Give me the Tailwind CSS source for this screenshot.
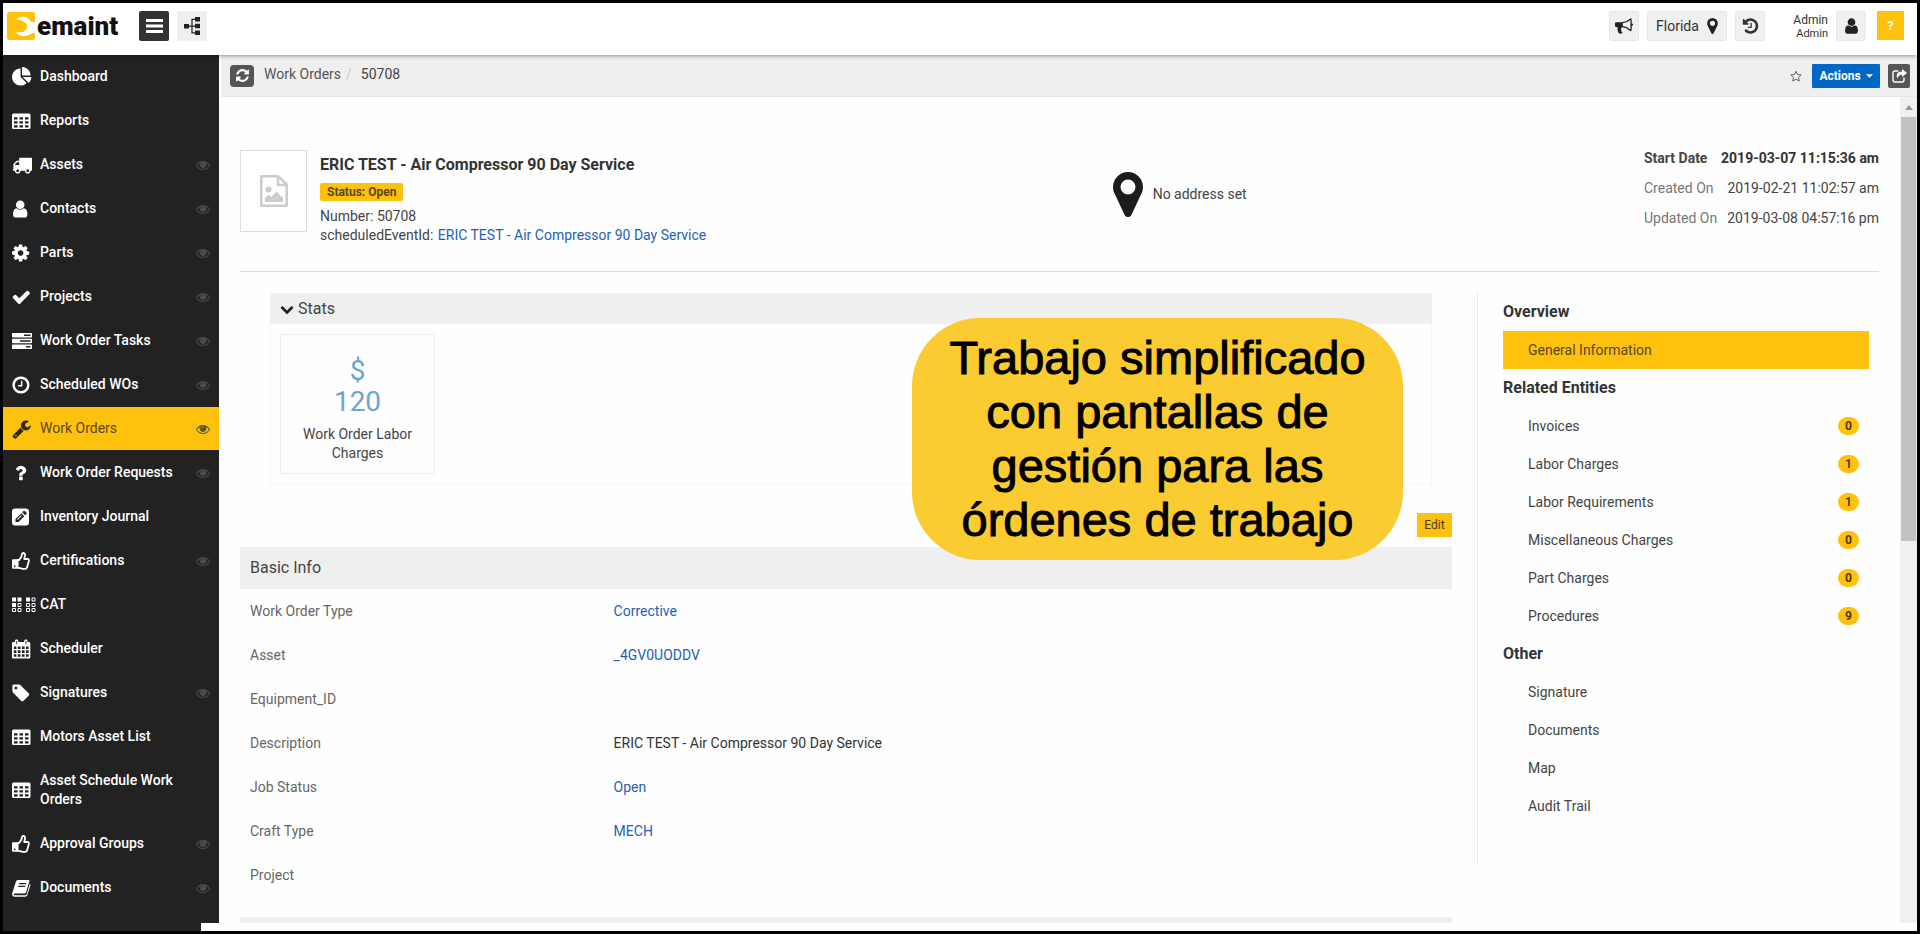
<!DOCTYPE html>
<html lang="en">
<head>
    <meta charset="UTF-8">
    <title>Work Orders - 50708</title>
    <script src="https://cdn.jsdelivr.net/npm/@tailwindcss/browser@4"></script>
</head>
<body class="relative h-screen flex flex-col overflow-hidden border-[3px] border-black bg-[#fefefe] font-[Roboto,sans-serif] text-sm leading-[19px] text-[#444]">

    <!-- Icons -->
    <svg class="hidden">
        <symbol id="i-pie" viewBox="0 0 1792 1792"><path d="M768 890l546 546q-106 108-247.5 168t-298.5 60q-209 0-385.5-103t-279.5-279.5-103-385.5 103-385.5 279.5-279.5 385.5-103v762zm187 6h773q0 157-60 298.5t-168 247.5zm709-128h-768v-768q209 0 385.5 103t279.5 279.5 103 385.5z"/></symbol>
        <symbol id="i-table" viewBox="0 0 20 20"><path fill-rule="evenodd" d="M1.5 2.5h15.500q1.500 0 1.500 1.500v12.500q0 1.500-1.500 1.500h-15.500q-1.500 0-1.500-1.500v-12.500q0-1.500 1.500-1.500zM2 6.200v2.300h3.500v-2.300zM7.500 6.200v2.300h3.500v-2.300zM13 6.200v2.300h3.500v-2.300zM2 10.200v2.300h3.500v-2.300zM7.500 10.200v2.300h3.500v-2.300zM13 10.200v2.300h3.500v-2.300zM2 14.200v2.300h3.500v-2.300zM7.500 14.200v2.300h3.500v-2.300zM13 14.200v2.300h3.500v-2.300z"/></symbol>
        <symbol id="i-truck" viewBox="0 0 1792 1792"><path d="M640 1408q0-52-38-90t-90-38-90 38-38 90 38 90 90 38 90-38 38-90zm-384-512h384v-256h-158q-13 0-22 9l-195 195q-9 9-9 22v30zm1280 512q0-52-38-90t-90-38-90 38-38 90 38 90 90 38 90-38 38-90zm256-1088v1024q0 15-4 26.5t-13.500 18.500-16.500 11.500-23.500 6-22.500 2-25.500 0-22.500-.5q0 106-75 181t-181 75-181-75-75-181h-384q0 106-75 181t-181 75-181-75-75-181h-64q-3 0-22.500.5t-25.500 0-22.500-2-23.500-6-16.500-11.500-13.500-18.500-4-26.500q0-26 19-45t45-19v-320q0-8-.5-35t0-38 2.500-34.500 6.500-37 14-30.500 22.500-30l198-198q19-19 50.500-32t58.500-13h160v-192q0-26 19-45t45-19h1024q26 0 45 19t19 45z"/></symbol>
        <symbol id="i-user" viewBox="160 0 1792 1792"><path d="M1536 1399q0 109-62.5 187t-150.5 78h-854q-88 0-150.5-78t-62.5-187q0-85 8.5-160.5t31.5-152 58.5-131 94-89 134.5-34.5q131 128 313 128t313-128q76 0 134.5 34.5t94 89 58.5 131 31.5 152 8.5 160.5zm-256-887q0 159-112.5 271.5t-271.5 112.5-271.5-112.5-112.5-271.5 112.5-271.5 271.5-112.5 271.5 112.5 112.5 271.5z"/></symbol>
        <symbol id="i-cog" viewBox="128 0 1792 1792"><path d="M1152 896q0-106-75-181t-181-75-181 75-75 181 75 181 181 75 181-75 75-181zm512-109v222q0 12-8 23t-20 13l-185 28q-19 54-39 91 35 50 107 138 10 12 10 25t-9 23q-27 37-99 108t-94 71q-12 0-26-9l-138-108q-44 23-91 38-16 136-29 186-7 28-36 28h-222q-14 0-24.5-8.5t-11.5-21.5l-28-184q-49-16-90-37l-141 107q-10 9-25 9-14 0-25-11-126-114-165-168-7-10-7-23 0-12 8-23 15-21 51-66.5t54-70.5q-27-50-41-99l-183-27q-13-2-21-12.5t-8-23.5v-222q0-12 8-23t19-13l186-28q14-46 39-92-40-57-107-138-10-12-10-24 0-10 9-23 26-36 98.5-107.5t94.5-71.5q13 0 26 10l138 107q44-23 91-38 16-136 29-186 7-28 36-28h222q14 0 24.5 8.5t11.5 21.5l28 184q49 16 90 37l142-107q9-9 24-9 13 0 25 10 129 119 165 170 7 8 7 22 0 12-8 23-15 21-51 66.5t-54 70.5q26 50 41 98l183 28q13 2 21 12.5t8 23.5z"/></symbol>
        <symbol id="i-check" viewBox="64 0 1792 1792"><path d="M1671 566q0 40-28 68l-724 724-136 136q-28 28-68 28t-68-28l-136-136-362-362q-28-28-28-68t28-68l136-136q28-28 68-28t68 28l294 295 656-657q28-28 68-28t68 28l136 136q28 28 28 68z"/></symbol>
        <symbol id="i-tasks" viewBox="0 0 20 20"><path fill-rule="evenodd" d="M.7 2h18.600q.7 0 .7.7v3.100q0 .7-.7.7h-18.600q-.7 0-.7-.7v-3.100q0-.7.7-.7zM12 3.500v1.500h6.500v-1.500zM.7 7.700h18.600q.7 0 .7.7v3.100q0 .7-.7.7h-18.600q-.7 0-.7-.7v-3.100q0-.7.7-.7zM8 9.200v1.500h10.500v-1.500zM.7 13.400h18.600q.7 0 .7.7v3.100q0 .7-.7.7h-18.600q-.7 0-.7-.7v-3.100q0-.7.7-.7zM14 14.900v1.500h4.500v-1.500z"/></symbol>
        <symbol id="i-clock" viewBox="96 0 1792 1792"><path d="M1024 544v448q0 14-9 23t-23 9h-320q-14 0-23-9t-9-23v-64q0-14 9-23t23-9h224v-352q0-14 9-23t23-9h64q14 0 23 9t9 23zm416 352q0-148-73-273t-198-198-273-73-273 73-198 198-73 273 73 273 198 198 273 73 273-73 198-198 73-273zm224 0q0 209-103 385.5t-279.5 279.5-385.5 103-385.5-103-279.5-279.5-103-385.5 103-385.5 279.5-279.5 385.5-103 385.5 103 279.5 279.5 103 385.5z"/></symbol>
        <symbol id="i-wrench" viewBox="32 0 1792 1792"><path d="M448 1472q0-26-19-45t-45-19-45 19-19 45 19 45 45 19 45-19 19-45zm644-420l-682 682q-37 37-90 37-52 0-91-37l-106-108q-38-36-38-90 0-53 38-91l681-681q39 98 114.5 173.5t173.5 114.5zm634-435q0 39-23 106-47 134-164.5 217.5t-258.5 83.5q-185 0-316.5-131.5t-131.5-316.5 131.5-316.5 316.5-131.5q58 0 121.5 16.5t107.5 46.5q16 11 16 28t-16 28l-293 169v224l193 107q5-3 79-48.5t135.5-81 70.5-35.5q15 0 23.5 10t8.5 25z"/></symbol>
        <symbol id="i-question" viewBox="128 0 1792 1792"><path d="M1088 1256v240q0 16-12 28t-28 12h-240q-16 0-28-12t-12-28v-240q0-16 12-28t28-12h240q16 0 28 12t12 28zm316-600q0 54-15.5 101t-35 76.5-55 59.5-57.5 43.5-61 35.5q-41 23-68.5 65t-27.5 67q0 17-12 32.5t-28 15.5h-240q-15 0-25.5-18.5t-10.5-37.5v-45q0-83 65-156.5t143-108.5q59-27 84-56t25-76q0-42-46.5-74t-107.5-32q-65 0-108 29-35 25-107 115-13 16-31 16-12 0-25-8l-164-125q-13-10-15.5-25t5.5-28q160-266 464-266 80 0 161 31t146 83 106 127.5 41 158.5z"/></symbol>
        <symbol id="i-pencil-square" viewBox="0 0 20 20"><path fill-rule="evenodd" d="M3 1.500h11q3 0 3 3v11q0 3-3 3h-11q-3 0-3-3v-11q0-3 3-3zM3.500 12v3h3l5.800-5.800-3-3zM10.200 5.300l3 3 1.300-1.300q.6-.6 0-1.200l-1.800-1.800q-.6-.6-1.200 0zM5 12.300l4.200-4.200.6.6-4.200 4.200z"/></symbol>
        <symbol id="i-thumb" viewBox="0 0 20 20"><path fill="none" stroke="currentColor" stroke-width="1.800" stroke-linejoin="round" d="M5.500 9h1.500c1.500-1.500 2.300-2.500 2.700-4.500.2-1.400.5-2.500 1.500-2.500 1.400 0 2 1.200 1.800 2.800l-.8 3.200h3.300c1.300 0 1.700 1 1.300 2.200l-1.700 6c-.3 1-.9 1.600-2 1.600h-2.100c-2 0-3.500-1-5.500-1.200z"/><path fill-rule="evenodd" d="M1 8.300h5.200v9.500h-5.200q-1 0-1-1v-7.500q0-1 1-1zM2.700 14.600a.8.800 0 1 0 .01 0z"/></symbol>
        <symbol id="i-cat" viewBox="0 0 24 20"><path d="M0 2.500h4v4h-4zM5.500 2.500h4v4h-4zM0 8h4v4h-4zM14 2.500h4v4h-4z"/><path fill="none" stroke="currentColor" d="M6 8.500h3v3h-3zM.5 13.500h3v3h-3zM6 13.500h3v3h-3zM20 3h3v3h-3zM14.500 8.500h3v3h-3zM20 8.500h3v3h-3zM14.500 13.500h3v3h-3zM20 13.500h3v3h-3z"/></symbol>
        <symbol id="i-calendar" viewBox="0 0 20 20"><path fill-rule="evenodd" d="M1.300 3h1.700v-1.200q0-1.300 1.300-1.300h.7q1.300 0 1.300 1.300v1.200h5.900v-1.200q0-1.300 1.300-1.300h.7q1.300 0 1.300 1.300v1.200h1.500q1.300 0 1.300 1.300v13.900q0 1.300-1.300 1.300h-15.700q-1.300 0-1.300-1.300v-13.900q0-1.300 1.300-1.300zM4.300 2v3.300h.9v-3.300zM13.500 2v3.300h.9v-3.300zM1.800 7.500v2.500h2.600v-2.500zM5.800 7.500v2.500h2.700v-2.500zM9.900 7.500v2.500h2.700v-2.500zM14 7.500v2.500h2.600v-2.500zM1.800 11.300v2.600h2.600v-2.600zM5.800 11.300v2.600h2.700v-2.600zM9.900 11.300v2.600h2.700v-2.600zM14 11.300v2.600h2.600v-2.600zM1.800 15.200v2.600h2.600v-2.600zM5.800 15.200v2.600h2.700v-2.600zM9.900 15.200v2.600h2.700v-2.600zM14 15.200v2.600h2.600v-2.600z"/></symbol>
        <symbol id="i-tag" viewBox="96 0 1792 1792"><path d="M576 448q0-53-37.5-90.5t-90.5-37.5-90.5 37.5-37.5 90.5 37.5 90.5 90.5 37.5 90.5-37.5 37.5-90.5zm1067 576q0 53-37 90l-491 492q-39 37-91 37-53 0-90-37l-715-716q-38-37-64.5-101t-26.5-117v-416q0-52 38-90t90-38h416q53 0 117 26.5t102 64.5l715 714q37 39 37 91z"/></symbol>
        <symbol id="i-book" viewBox="0 0 20 20"><path fill-rule="evenodd" d="M6 2h10.500q1.300 0 .9 1.300l-3.400 11q-.4 1.200-1.700 1.200h-9.800q-1 0-.8.900.3.900 1.500.9h10.200q.8 0 1.100-.8l3.300-10.800q.9.600.6 1.800l-3.200 9.800q-.5 1.400-2 1.400h-10.700q-1.700 0-2.300-1.700-.3-1 .1-2l3.400-10.800q.6-2.200 2.300-2.200zM7.300 5l-.4 1.200h7l.4-1.200zM6.500 7.700l-.4 1.200h7l.4-1.200z"/></symbol>
        <symbol id="i-eye" viewBox="0 0 1792 1792"><path d="M1664 960q-152-236-381-353 61 104 61 225 0 185-131.5 316.5t-316.5 131.5-316.5-131.5-131.5-316.5q0-121 61-225-229 117-381 353 133 205 333.5 326.5t434.5 121.5 434.5-121.5 333.5-326.5zm-720-384q0-20-14-34t-34-14q-125 0-214.5 89.5t-89.5 214.5q0 20 14 34t34 14 34-14 14-34q0-86 61-147t147-61q20 0 34-14t14-34zm848 384q0 34-20 69-140 230-376.5 368.5t-499.5 138.5-499.5-139-376.5-368q-20-35-20-69t20-69q140-229 376.5-368t499.5-139 499.5 139 376.5 368q20 35 20 69z"/><circle cx="896" cy="832" r="330" opacity=".5"/></symbol>
        <symbol id="i-marker" viewBox="384 128 1024 1536"><path d="M1152 640q0-106-75-181t-181-75-181 75-75 181 75 181 181 75 181-75 75-181zm256 0q0 109-33 179l-364 774q-16 33-47.5 52t-67.5 19-67.5-19-46.5-52l-365-774q-33-70-33-179 0-212 150-362t362-150 362 150 150 362z"/></symbol>
        <symbol id="i-bullhorn" viewBox="0 0 1792 1792"><path d="M1664 640q53 0 90.5 37.5t37.5 90.5-37.5 90.5-90.5 37.5v384q0 52-38 90t-90 38q-417-347-812-380-58 19-91 66t-31 100.5 40 92.5q-20 33-23 65.5t6 58 33.5 55 48 50 61.5 50.5q-29 58-111.5 83t-168.5 11.5-132-55.5q-7-23-29.5-87.5t-32-94.5-23-89-15-101 3.5-98.5 22-110.5h-122q-66 0-113-47t-47-113v-192q0-66 47-113t113-47h480q435 0 896-384 52 0 90 38t38 90v384zm-128 604v-954q-394 302-768 343v270q377 42 768 341z"/></symbol>
        <symbol id="i-history" viewBox="64 0 1664 1792"><path d="M1664 896q0 156-61 298t-164 245-245 164-298 61q-172 0-327-72.5t-264-204.5q-7-10-6.5-22.5t8.5-20.5l137-138q10-9 25-9 16 2 23 12 73 95 179 147t225 52q104 0 198.5-40.5t163.5-109.5 109.5-163.5 40.5-198.5-40.5-198.5-109.5-163.5-163.5-109.5-198.5-40.5q-98 0-188 35.5t-160 101.5l137 138q31 30 14 69-17 40-59 40h-448q-26 0-45-19t-19-45v-448q0-42 40-59 39-17 69 14l130 129q107-101 244.5-156.5t284.5-55.5q156 0 298 61t245 164 164 245 61 298zm-640-288v448q0 14-9 23t-23 9h-320q-14 0-23-9t-9-23v-64q0-14 9-23t23-9h224v-352q0-14 9-23t23-9h64q14 0 23 9t9 23z"/></symbol>
        <symbol id="i-refresh" viewBox="0 0 1792 1792"><path d="M1639 1056q0 5-1 7-64 268-268 434.5t-478 166.5q-146 0-282.5-55t-243.5-157l-129 129q-19 19-45 19t-45-19-19-45v-448q0-26 19-45t45-19h448q26 0 45 19t19 45-19 45l-137 137q71 66 161 102t187 36q134 0 250-65t186-179q11-17 53-117 8-23 30-23h192q13 0 22.5 9.5t9.5 22.5zm25-800v448q0 26-19 45t-45 19h-448q-26 0-45-19t-19-45 19-45l138-138q-148-137-349-137-134 0-250 65t-186 179q-11 17-53 117-8 23-30 23h-199q-13 0-22.5-9.5t-9.5-22.5v-7q65-268 270-434.5t480-166.5q146 0 284 55.5t245 156.5l130-129q19-19 45-19t45 19 19 45z"/></symbol>
        <symbol id="i-chevron" viewBox="0 0 1792 1792"><path d="M1683 808l-742 741q-19 19-45 19t-45-19l-742-741q-19-19-19-45.5t19-45.5l166-165q19-19 45-19t45 19l531 531 531-531q19-19 45-19t45 19l166 165q19 19 19 45.5t-19 45.5z"/></symbol>
    </svg>

    <!-- Top bar -->
    <header class="relative z-10 flex h-[52px] shrink-0 items-start bg-white pt-2 pr-[13px] pl-1 shadow-[0_1px_4px_rgba(0,0,0,0.4)]">
        <a href="#" class="flex h-[30px] w-[132px] items-center gap-[2px] text-[26px] leading-[30px] font-black text-[#111]">
            <svg class="h-[28px] w-[28px] shrink-0" viewBox="0 0 28 28">
                <path fill="#fec10d" d="M3 0h23q2 0 2 2v24q0 2-2 2h-23q-3 0-3-3v-22q0-3 3-3z"/>
                <path fill="#fff" d="M9 7q4-3 9-2 4 1 6 5h4v11h-3q-3 3-8 3-5 0-8-3.500l7-.5 4-3.500v-4l-4-3.500z"/>
            </svg>
            emaint
        </a>
        <button aria-label="Toggle menu" class="mr-2 flex h-[30px] w-[30px] items-center justify-center rounded-[2px] bg-[#333]">
            <svg class="h-4 w-[17px] fill-white" viewBox="0 0 17 16"><path d="M0 1h17v3h-17zM0 6.500h17v3h-17zM0 12h17v3h-17z"/></svg>
        </button>
        <button aria-label="Hierarchy" class="flex h-[30px] w-[30px] items-center justify-center rounded-[2px] bg-[#efefef]">
            <svg class="h-[18px] w-4 fill-[#222]" viewBox="0 0 16 18"><path d="M0 7h5v4.500h-5zM11 0h5v4.500h-5zM11 6.800h5v4.500h-5zM11 13.500h5v4.500h-5z"/><path fill="none" stroke="#222" stroke-width="1.200" d="M5 9.200h6M11 2.300h-3v13.500h3"/></svg>
        </button>
        <div class="ml-auto flex items-start gap-2 text-[#333]">
            <button aria-label="Announcements" class="flex h-[30px] w-[30px] items-center justify-center rounded-[2px] border border-[#e8e8e8] bg-[#f0f0f0]"><svg class="h-[18px] w-[18px] fill-[#222]"><use href="#i-bullhorn"/></svg></button>
            <button class="flex h-[30px] w-[80px] items-center justify-center gap-2 rounded-[2px] border border-[#e8e8e8] bg-[#f0f0f0]">Florida <svg class="h-4 w-[11px] fill-[#222]"><use href="#i-marker"/></svg></button>
            <button aria-label="History" class="flex h-[30px] w-[30px] items-center justify-center rounded-[2px] border border-[#e8e8e8] bg-[#f0f0f0]"><svg class="h-[18px] w-[17px] fill-[#333]"><use href="#i-history"/></svg></button>
            <div class="w-[55px] pt-[2px] text-right leading-[13px]">
                <div class="text-xs leading-[14px]">Admin</div>
                <div class="text-[11px]">Admin</div>
            </div>
            <button aria-label="Account" class="flex h-[30px] w-[30px] items-center justify-center rounded-[2px] border border-[#e8e8e8] bg-[#f0f0f0]"><svg class="h-[18px] w-[13px] fill-[#222]" viewBox="256 0 1280 1792"><path d="M1536 1399q0 109-62.5 187t-150.5 78h-854q-88 0-150.5-78t-62.5-187q0-85 8.5-160.5t31.5-152 58.5-131 94-89 134.5-34.5q131 128 313 128t313-128q76 0 134.5 34.5t94 89 58.5 131 31.5 152 8.5 160.5zm-256-887q0 159-112.5 271.5t-271.5 112.5-271.5-112.5-112.5-271.5 112.5-271.5 271.5-112.5 271.5 112.5 112.5 271.5z"/></svg></button>
            <button class="ml-[3px] h-[29px] w-[27px] bg-[#fec10d] text-xs font-bold text-white">?</button>
        </div>
    </header>

    <div class="flex min-h-0 flex-1">
        <!-- Sidebar -->
        <nav class="relative w-[216px] shrink-0 overflow-hidden bg-[#222] font-medium text-white">
            <ul class="flex flex-col gap-px">
                <li><a href="#" class="flex items-center gap-2 px-[9px] py-3"><svg class="-my-1 h-5 w-5 shrink-0 fill-current"><use href="#i-pie"/></svg><span class="w-[150px]">Dashboard</span></a></li>
                <li><a href="#" class="flex items-center gap-2 px-[9px] py-3"><svg class="-my-1 h-5 w-5 shrink-0 fill-current"><use href="#i-table"/></svg><span class="w-[150px]">Reports</span></a></li>
                <li><a href="#" class="flex items-center gap-2 px-[9px] py-3"><svg class="-my-1 h-5 w-5 shrink-0 fill-current"><use href="#i-truck"/></svg><span class="w-[150px]">Assets</span><svg class="ml-auto h-3.5 w-3.5 shrink-0 fill-[#4c4c4c]"><use href="#i-eye"/></svg></a></li>
                <li><a href="#" class="flex items-center gap-2 px-[9px] py-3"><svg class="-my-1 h-5 w-5 shrink-0 fill-current"><use href="#i-user"/></svg><span class="w-[150px]">Contacts</span><svg class="ml-auto h-3.5 w-3.5 shrink-0 fill-[#4c4c4c]"><use href="#i-eye"/></svg></a></li>
                <li><a href="#" class="flex items-center gap-2 px-[9px] py-3"><svg class="-my-1 h-5 w-5 shrink-0 fill-current"><use href="#i-cog"/></svg><span class="w-[150px]">Parts</span><svg class="ml-auto h-3.5 w-3.5 shrink-0 fill-[#4c4c4c]"><use href="#i-eye"/></svg></a></li>
                <li><a href="#" class="flex items-center gap-2 px-[9px] py-3"><svg class="-my-1 h-5 w-5 shrink-0 fill-current"><use href="#i-check"/></svg><span class="w-[150px]">Projects</span><svg class="ml-auto h-3.5 w-3.5 shrink-0 fill-[#4c4c4c]"><use href="#i-eye"/></svg></a></li>
                <li><a href="#" class="flex items-center gap-2 px-[9px] py-3"><svg class="-my-1 h-5 w-5 shrink-0 fill-current"><use href="#i-tasks"/></svg><span class="w-[150px]">Work Order Tasks</span><svg class="ml-auto h-3.5 w-3.5 shrink-0 fill-[#4c4c4c]"><use href="#i-eye"/></svg></a></li>
                <li><a href="#" class="flex items-center gap-2 px-[9px] py-3"><svg class="-my-1 h-5 w-5 shrink-0 fill-current"><use href="#i-clock"/></svg><span class="w-[150px]">Scheduled WOs</span><svg class="ml-auto h-3.5 w-3.5 shrink-0 fill-[#4c4c4c]"><use href="#i-eye"/></svg></a></li>
                <li><a href="#" class="flex items-center gap-2 bg-[#fec10d] px-[9px] py-3 font-normal text-[#5a4715]"><svg class="-my-1 h-5 w-5 shrink-0 fill-[#332a10]"><use href="#i-wrench"/></svg><span class="w-[150px]">Work Orders</span><svg class="ml-auto h-3.5 w-3.5 shrink-0 fill-[#5a5a2c]"><use href="#i-eye"/></svg></a></li>
                <li><a href="#" class="flex items-center gap-2 px-[9px] py-3"><svg class="-my-1 h-5 w-5 shrink-0 fill-current"><use href="#i-question"/></svg><span class="w-[150px]">Work Order Requests</span><svg class="ml-auto h-3.5 w-3.5 shrink-0 fill-[#4c4c4c]"><use href="#i-eye"/></svg></a></li>
                <li><a href="#" class="flex items-center gap-2 px-[9px] py-3"><svg class="-my-1 h-5 w-5 shrink-0 fill-current"><use href="#i-pencil-square"/></svg><span class="w-[150px]">Inventory Journal</span></a></li>
                <li><a href="#" class="flex items-center gap-2 px-[9px] py-3"><svg class="-my-1 h-5 w-5 shrink-0 fill-current"><use href="#i-thumb"/></svg><span class="w-[150px]">Certifications</span><svg class="ml-auto h-3.5 w-3.5 shrink-0 fill-[#4c4c4c]"><use href="#i-eye"/></svg></a></li>
                <li><a href="#" class="flex items-center gap-1 px-[9px] py-3"><svg class="-my-1 h-5 w-6 shrink-0 fill-current"><use href="#i-cat"/></svg><span class="w-[150px]">CAT</span></a></li>
                <li><a href="#" class="flex items-center gap-2 px-[9px] py-3"><svg class="-my-1 h-5 w-5 shrink-0 fill-current"><use href="#i-calendar"/></svg><span class="w-[150px]">Scheduler</span></a></li>
                <li><a href="#" class="flex items-center gap-2 px-[9px] py-3"><svg class="-my-1 h-5 w-5 shrink-0 fill-current"><use href="#i-tag"/></svg><span class="w-[150px]">Signatures</span><svg class="ml-auto h-3.5 w-3.5 shrink-0 fill-[#4c4c4c]"><use href="#i-eye"/></svg></a></li>
                <li><a href="#" class="flex items-center gap-2 px-[9px] py-3"><svg class="-my-1 h-5 w-5 shrink-0 fill-current"><use href="#i-table"/></svg><span class="w-[150px]">Motors Asset List</span></a></li>
                <li><a href="#" class="flex items-center gap-2 px-[9px] py-3"><svg class="-my-1 h-5 w-5 shrink-0 fill-current"><use href="#i-table"/></svg><span class="w-[150px]">Asset Schedule Work Orders</span></a></li>
                <li><a href="#" class="flex items-center gap-2 px-[9px] py-3"><svg class="-my-1 h-5 w-5 shrink-0 fill-current"><use href="#i-thumb"/></svg><span class="w-[150px]">Approval Groups</span><svg class="ml-auto h-3.5 w-3.5 shrink-0 fill-[#4c4c4c]"><use href="#i-eye"/></svg></a></li>
                <li><a href="#" class="flex items-center gap-2 px-[9px] py-3"><svg class="-my-1 h-5 w-5 shrink-0 fill-current"><use href="#i-book"/></svg><span class="w-[150px]">Documents</span><svg class="ml-auto h-3.5 w-3.5 shrink-0 fill-[#4c4c4c]"><use href="#i-eye"/></svg></a></li>
            </ul>
            <div class="absolute right-0 bottom-0 h-2 w-[18px] bg-white"></div>
        </nav>

        <main class="flex min-w-0 flex-1 flex-col pb-2">
            <!-- Breadcrumb -->
            <div class="ml-[2px] flex h-[42px] shrink-0 items-center border-b border-[#e6e6e6] bg-[#efefef] pr-[7px] pl-[9px]">
                <button aria-label="Refresh" class="mr-2.5 flex h-[22px] w-6 items-center justify-center rounded bg-[#555]"><svg class="h-[15px] w-[15px] fill-white"><use href="#i-refresh"/></svg></button>
                <nav class="flex pb-[2px]">
                    <a href="#" class="text-[#555]">Work Orders</a>
                    <span class="mr-[9px] ml-[5px] text-[#ccc]">/</span>
                    <span>50708</span>
                </nav>
                <button aria-label="Favorite" class="mr-2.5 ml-auto"><svg class="h-3 w-3" viewBox="0 0 13 12"><path fill="none" stroke="#555" d="M6.500.9l1.700 3.500 3.900.5-2.800 2.700.7 3.800-3.500-1.800-3.500 1.800.7-3.800-2.800-2.700 3.900-.5z"/></svg></button>
                <button class="mr-2 flex h-6 w-[68px] items-center justify-center gap-[5px] rounded-[1px] bg-[#0168c5] text-xs font-bold text-white">Actions <svg class="h-1 w-[7px] fill-white" viewBox="0 0 8 4"><path d="M0 0h8l-4 4z"/></svg></button>
                <button aria-label="Share" class="flex h-6 w-[22px] items-center justify-center rounded-[2px] bg-[#555]"><svg class="h-[14px] w-[15px]" viewBox="0 0 15 14"><path fill="none" stroke="#fff" stroke-width="1.400" d="M6.500 2h-3.500q-2 0-2 2v7q0 2 2 2h7q2 0 2-2v-2.500"/><path fill="#fff" d="M10 0l5 4-5 4v-2.300q-3.500-.2-4.500 3.800-2.800-6.800 4.500-7z"/></svg></button>
            </div>

            <div class="flex min-h-0 flex-1">
                <div class="min-w-0 flex-1 overflow-hidden pt-[45px] pr-[21px] pl-[21px]">
                    <!-- Record summary -->
                    <section class="flex items-start border-b border-[#ddd] pb-[26px]">
                        <div class="flex w-[53%] gap-[13px] pt-2">
                            <div class="flex h-[82px] w-[67px] shrink-0 items-center justify-center border border-[#ddd] bg-white">
                                <svg class="h-8 w-7" viewBox="0 0 28 32"><path fill="none" stroke="#ccc" stroke-width="2.500" stroke-linejoin="round" d="M1.300 1.300h17.200l8.200 8.200v21.200h-25.400zM18 1.500v8.500h8.500"/><circle cx="8.500" cy="14.500" r="3" fill="#ccc"/><path fill="#ccc" d="M5 27v-4l3.500-3.500 2.500 2.500 5.500-5.500 6.500 6.500v4z"/></svg>
                            </div>
                            <div class="pt-[5px]">
                                <h1 class="text-base leading-5 font-bold text-[#333]">ERIC TEST - Air Compressor 90 Day Service</h1>
                                <div class="mt-2 mb-1.5 w-fit rounded-[2px] bg-[#fec10d] px-[7px] text-xs leading-[18px] font-bold text-[#5a4715]">Status: Open</div>
                                <p>Number: 50708</p>
                                <p>scheduledEventId: <a href="#" class="ml-px text-[#1f61b5]">ERIC TEST - Air Compressor 90 Day Service</a></p>
                            </div>
                        </div>
                        <div class="flex items-center gap-2.5 pt-[30px] pl-1">
                            <svg class="h-[45px] w-[30px] fill-[#1c1c1c]"><use href="#i-marker"/></svg>
                            <p>No address set</p>
                        </div>
                        <div class="ml-auto w-[235px] pt-px leading-[30px]">
                            <p class="flex justify-between font-bold text-[#444]"><span>Start Date</span><span class="text-[#333]">2019-03-07 11:15:36 am</span></p>
                            <p class="flex justify-between"><span class="text-[#777]">Created On</span><span>2019-02-21 11:02:57 am</span></p>
                            <p class="flex justify-between"><span class="text-[#777]">Updated On</span><span>2019-03-08 04:57:16 pm</span></p>
                        </div>
                    </section>

                    <div class="flex items-start gap-[25px] pt-[21px]">
                        <div class="min-w-0 flex-1">
                            <!-- Stats -->
                            <section class="mr-5 ml-[30px]">
                                <h2 class="flex h-[31px] items-center gap-1 bg-[#efefef] pl-2.5 text-base text-[#444]"><svg class="h-3.5 w-3.5 fill-[#222]"><use href="#i-chevron"/></svg>Stats</h2>
                                <div class="border border-t-0 border-[#f5f5f5] p-2.5 pl-[9px]">
                                    <div class="flex h-[140px] w-[155px] flex-col items-center border border-[#efefef] px-4 pt-5 text-center">
                                        <div class="text-[28px] leading-[31px] text-[#6da5cf]">$<br>120</div>
                                        <div class="mt-2">Work Order Labor Charges</div>
                                    </div>
                                </div>
                            </section>
                            <div class="flex justify-end pt-[28px] pb-2.5">
                                <button class="h-6 w-[35px] bg-[#fec10d] text-xs text-[#4b3a0a]">Edit</button>
                            </div>

                            <!-- Basic info -->
                            <section>
                                <h2 class="bg-[#efefef] px-2.5 text-base leading-[42px]">Basic Info</h2>
                                <dl class="leading-[44px]">
                                    <div class="flex"><dt class="w-[30%] pl-2.5 text-[#666]">Work Order Type</dt><dd class="pl-2.5"><a href="#" class="text-[#1f61b5]">Corrective</a></dd></div>
                                    <div class="flex"><dt class="w-[30%] pl-2.5 text-[#666]">Asset</dt><dd class="pl-2.5"><a href="#" class="text-[#1f61b5]">_4GV0UODDV</a></dd></div>
                                    <div class="flex"><dt class="w-[30%] pl-2.5 text-[#666]">Equipment_ID</dt><dd class="pl-2.5"></dd></div>
                                    <div class="flex"><dt class="w-[30%] pl-2.5 text-[#666]">Description</dt><dd class="pl-2.5 text-[#333]">ERIC TEST - Air Compressor 90 Day Service</dd></div>
                                    <div class="flex"><dt class="w-[30%] pl-2.5 text-[#666]">Job Status</dt><dd class="pl-2.5"><a href="#" class="text-[#1f61b5]">Open</a></dd></div>
                                    <div class="flex"><dt class="w-[30%] pl-2.5 text-[#666]">Craft Type</dt><dd class="pl-2.5"><a href="#" class="text-[#1f61b5]">MECH</a></dd></div>
                                    <div class="flex"><dt class="w-[30%] pl-2.5 text-[#666]">Project</dt><dd class="pl-2.5"></dd></div>
                                </dl>
                            </section>
                            <div class="mt-5 h-[42px] bg-[#efefef]"></div>
                        </div>

                        <!-- Section links -->
                        <aside class="w-[402px] shrink-0 border-l border-[#e8e8e8] pr-2.5 pb-[39px] pl-[25px] leading-[38px]">
                            <h3 class="text-base leading-[38px] font-bold text-[#333]">Overview</h3>
                            <a href="#" class="block bg-[#fec10d] pl-[25px] text-[#5a4715]">General Information</a>
                            <h3 class="text-base leading-[38px] font-bold text-[#333]">Related Entities</h3>
                            <a href="#" class="flex items-center justify-between pr-2.5 pl-[25px]">Invoices <span class="rounded-full bg-[#fec10d] px-[7px] text-xs leading-[18px] font-bold text-[#4b3a0a]">0</span></a>
                            <a href="#" class="flex items-center justify-between pr-2.5 pl-[25px]">Labor Charges <span class="rounded-full bg-[#fec10d] px-[7px] text-xs leading-[18px] font-bold text-[#4b3a0a]">1</span></a>
                            <a href="#" class="flex items-center justify-between pr-2.5 pl-[25px]">Labor Requirements <span class="rounded-full bg-[#fec10d] px-[7px] text-xs leading-[18px] font-bold text-[#4b3a0a]">1</span></a>
                            <a href="#" class="flex items-center justify-between pr-2.5 pl-[25px]">Miscellaneous Charges <span class="rounded-full bg-[#fec10d] px-[7px] text-xs leading-[18px] font-bold text-[#4b3a0a]">0</span></a>
                            <a href="#" class="flex items-center justify-between pr-2.5 pl-[25px]">Part Charges <span class="rounded-full bg-[#fec10d] px-[7px] text-xs leading-[18px] font-bold text-[#4b3a0a]">0</span></a>
                            <a href="#" class="flex items-center justify-between pr-2.5 pl-[25px]">Procedures <span class="rounded-full bg-[#fec10d] px-[7px] text-xs leading-[18px] font-bold text-[#4b3a0a]">9</span></a>
                            <h3 class="text-base leading-[38px] font-bold text-[#333]">Other</h3>
                            <a href="#" class="block pl-[25px]">Signature</a>
                            <a href="#" class="block pl-[25px]">Documents</a>
                            <a href="#" class="block pl-[25px]">Map</a>
                            <a href="#" class="block pl-[25px]">Audit Trail</a>
                        </aside>
                    </div>
                </div>

                <!-- Scrollbar -->
                <div class="flex w-[17px] shrink-0 flex-col bg-[#f0f0f0]">
                    <div class="flex h-5 items-center justify-center"><svg class="h-[5px] w-2 fill-[#999]" viewBox="0 0 8 5"><path d="M0 5h8l-4-5z"/></svg></div>
                    <div class="mx-px h-[424px] bg-[#c1c1c1]"></div>
                </div>
            </div>
        </main>
    </div>

    <!-- Callout -->
    <div class="absolute top-[315px] left-[909px] z-20 flex h-[242px] w-[491px] items-center justify-center rounded-[68px] bg-[#fbcb32] text-center font-['Liberation_Sans',sans-serif] text-[47px] leading-[54px] text-black [-webkit-text-stroke:1px_black]">
        <p>Trabajo simplificado<br>con pantallas de<br>gestión para las<br>órdenes de trabajo</p>
    </div>
</body>
</html>
